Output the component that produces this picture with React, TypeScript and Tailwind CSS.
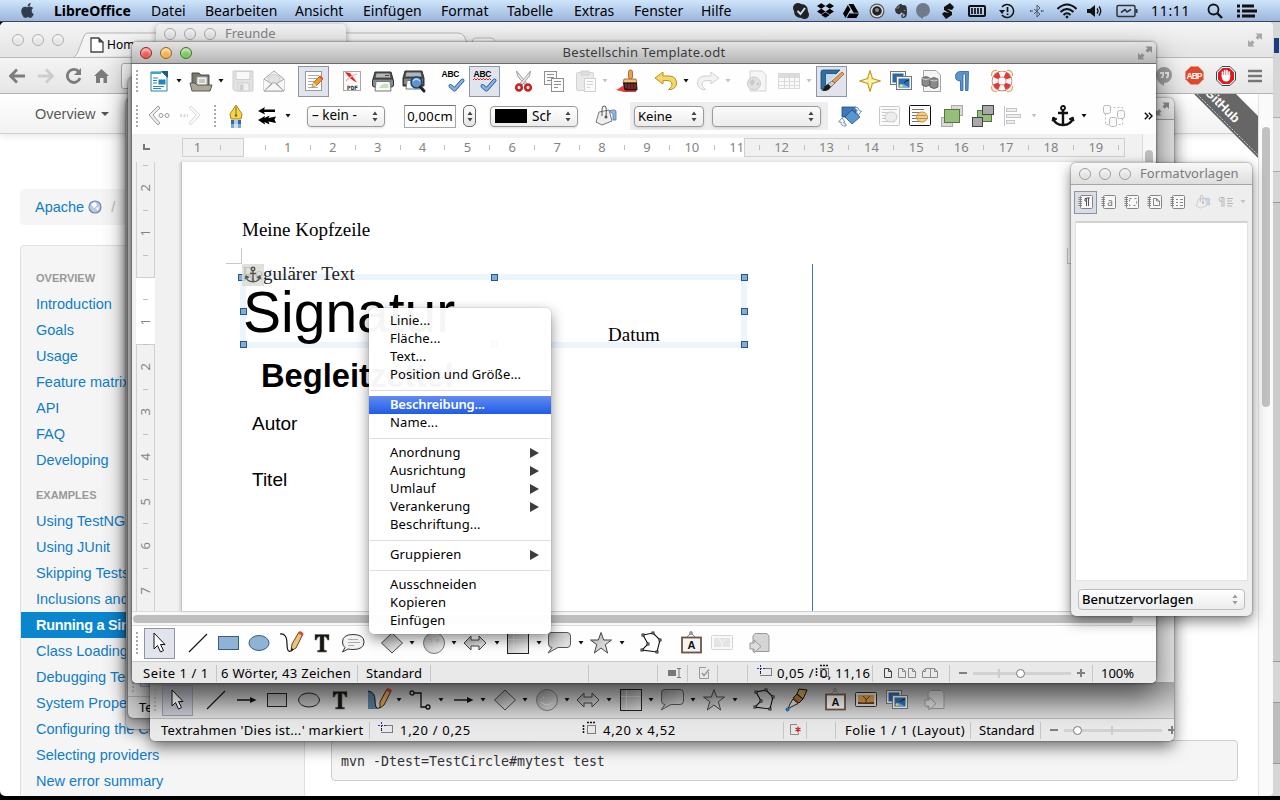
import React from "react";
import { FaApple, FaDropbox, FaGoogleDrive, FaEvernote } from "react-icons/fa";

const fullscreen = (
  <svg className="h-4 w-4 shrink-0" viewBox="0 0 16 16" fill="#8a8a8a">
    <path d="M8.500 1.500H15V8L12.800 5.800L10.800 7.800L8.500 5.500L10.500 3.500Z" />
    <path d="M7.500 14.500H1V8L3.200 10.200L5.200 8.200L7.500 10.500L5.500 12.500Z" />
  </svg>
);

const icons: Record<string, React.ReactNode> = {
  new: (
    <>
      <path d="M4 3H15L20 8V22H4Z" fill="#fff" stroke="#2a7ea8" />
      <path d="M14 2H21V9Z" fill="#16608a" />
      <rect x="4" y="3" width="10" height="2" fill="#3aa5cf" />
      <path d="M6 9H11M6 11.500H10M6 14H10M6 17.500H17M6 19.500H14" stroke="#2b87b5" strokeWidth="1.200" />
      <rect x="11.500" y="10.500" width="7" height="5" fill="#1c86c0" />
    </>
  ),
  open: (
    <>
      <path d="M3 4H10L12 6H20V17H3Z" fill="#77776a" stroke="#4d4d45" />
      <path d="M8 8H18V17H8Z" fill="#f4f4f0" stroke="#aaa" />
      <path d="M10 11H16M10 13H16" stroke="#999" />
      <path d="M1 14H6L8 16H23L21 22H3Z" fill="#a9a897" stroke="#5a5a50" />
    </>
  ),
  save: (
    <g stroke="#cfcfcf">
      <path d="M2 2H22V22H4L2 20Z" fill="#e2e2e2" />
      <rect x="5" y="2.500" width="14" height="8" fill="#f8f8f8" />
      <rect x="7" y="14" width="11" height="8" fill="#f0f0f0" />
      <rect x="9" y="16" width="3" height="5" fill="#cecece" />
    </g>
  ),
  mail: (
    <g fill="#f6f6f6" stroke="#a8a8a8">
      <path d="M2 10L12 2L22 10V22H2Z" />
      <path d="M6 8L12 5L18 8V15H6Z" fill="#e2e2e2" stroke="#ccc" />
      <path d="M2 10L10 15L2 22M22 10L14 15L22 22M2 22L10 14H14L22 22Z" />
    </g>
  ),
  edit: (
    <>
      <rect x="3.500" y="2.500" width="16" height="19" fill="#fff" stroke="#999" />
      <path d="M6 6.500H17M6 9.500H16M6 12.500H13M6 15.500H11M6 18.500H16" stroke="#aaa" />
      <path d="M10 18L11.500 13.500L18 7L21 10L14.500 16.500Z" fill="#f59a1b" stroke="#9c5b08" strokeWidth=".8" />
      <path d="M10 18L11.500 13.500L14.500 16.500Z" fill="#edd3a4" />
      <path d="M17 8L20 11L21.500 9.500L18.500 6.500Z" fill="#d9534f" />
    </>
  ),
  pdf: (
    <>
      <rect x="3.500" y="2.500" width="17" height="19" fill="#fafafa" stroke="#a9a9a9" />
      <path d="M5 3L10 4L17 13.500Q9 10 5 3Z" fill="#e0282c" />
      <path d="M6 12Q10 7 17 5" fill="none" stroke="#f3b0b0" strokeWidth="1.300" />
      <text x="12.500" y="20.500" textAnchor="middle" fontFamily="DejaVu Sans Mono" fontSize="6" fontWeight="bold" fill="#222">PDF</text>
    </>
  ),
  print: (
    <>
      <path d="M4 3H20L22 10V17H2V10Z" fill="#4a4e50" stroke="#333" />
      <path d="M5.500 4.500H18.500L19.500 8.500H4.500Z" fill="#b3b7b9" />
      <path d="M14 6.500H18" stroke="#444" />
      <rect x="1.500" y="10" width="21" height="8" rx="2" fill="#85898b" stroke="#333" />
      <path d="M5 12.500H19L20 22H4Z" fill="#f8faf7" stroke="#777" />
      <path d="M8 19Q11 14 17 15L17.500 19Z" fill="#c3e3b4" />
    </>
  ),
  preview: (
    <>
      <path d="M3 2H20L22 9V17H1V9Z" fill="#4a4e50" stroke="#333" />
      <path d="M4.500 3.500H18.500L19.500 7.500H3.500Z" fill="#b3b7b9" />
      <rect x="1.500" y="9" width="20" height="7" rx="1.500" fill="#85898b" stroke="#333" />
      <path d="M5 11.500H17L18 20H4Z" fill="#f8faf7" stroke="#777" />
      <circle cx="14.500" cy="13.500" r="5.500" fill="#5c93d2" stroke="#20456f" strokeWidth="1.500" />
      <path d="M11 12Q14 8 18 12" stroke="#bcd6f2" strokeWidth="1.500" fill="none" />
      <path d="M18.500 18L22 22" stroke="#222" strokeWidth="3" strokeLinecap="round" />
    </>
  ),
  abc: (
    <>
      <text x="9.500" y="7.500" textAnchor="middle" fontFamily="Liberation Sans" fontSize="8.500" fontWeight="bold" textLength="18" fill="#000">ABC</text>
      <path d="M9.500 17L13.500 20.500L21.500 11.500" fill="none" stroke="#285a94" strokeWidth="4" strokeLinecap="round" strokeLinejoin="round" />
      <path d="M9.500 17L13.500 20.500L21.500 11.500" fill="none" stroke="#85b4e6" strokeWidth="2.400" strokeLinecap="round" strokeLinejoin="round" />
    </>
  ),
  abcAuto: (
    <>
      <text x="9.500" y="7.500" textAnchor="middle" fontFamily="Liberation Sans" fontSize="8.500" fontWeight="bold" textLength="18" fill="#000">ABC</text>
      <path d="M0 11L1.500 9.500L3 11L4.500 9.500L6 11L7.500 9.500L9 11L10.500 9.500L12 11L13.500 9.500L15 11L16.500 9.500L18 11" fill="none" stroke="#e02020" />
      <path d="M9.500 17L13.500 20.500L21.500 11.500" fill="none" stroke="#285a94" strokeWidth="4" strokeLinecap="round" strokeLinejoin="round" />
      <path d="M9.500 17L13.500 20.500L21.500 11.500" fill="none" stroke="#85b4e6" strokeWidth="2.400" strokeLinecap="round" strokeLinejoin="round" />
    </>
  ),
  cut: (
    <>
      <path d="M4.500 2L5.500 7L13 16L14.500 14Z" fill="#e8e8e8" stroke="#8a8a8a" strokeWidth=".8" />
      <path d="M18.500 2L17.500 7L10 16L8.500 14Z" fill="#e8e8e8" stroke="#8a8a8a" strokeWidth=".8" />
      <g fill="none" stroke="#cc1f22" strokeWidth="2.600">
        <ellipse cx="7" cy="18.500" rx="2.800" ry="3" />
        <ellipse cx="16" cy="18.500" rx="2.800" ry="3" />
      </g>
    </>
  ),
  copy: (
    <g fill="#fafafa" stroke="#8f8f8f">
      <rect x="2.500" y="2.500" width="12" height="13" />
      <path d="M5 5.500H12M5 8.500H12M5 11.500H9" />
      <rect x="9.500" y="9.500" width="12" height="13" />
      <path d="M12 12.500H19M12 15.500H19M12 18.500H16" />
    </g>
  ),
  paste: (
    <g stroke="#d2d2d2">
      <rect x="2.500" y="3.500" width="17" height="18" rx="1" fill="#e9e9e9" />
      <rect x="7" y="2" width="8" height="4" fill="#ddd" />
      <rect x="10.500" y="9.500" width="11" height="13" fill="#fafafa" />
      <path d="M13 12.500H19M13 15.500H19M13 18.500H16" />
    </g>
  ),
  brush: (
    <>
      <path d="M0 21Q7 17 9 15L20 20L20 23H8Z" fill="#e94044" />
      <rect x="12.500" y="1" width="4" height="9" rx="1.800" fill="#e8a14e" stroke="#9a5b1c" strokeWidth=".8" />
      <path d="M8 10H20L21 14H7Z" fill="#efc07f" stroke="#9a5b1c" strokeWidth=".8" />
      <path d="M7.500 14H20.500L21 21H9Z" fill="#3a2020" stroke="#1b1111" />
      <path d="M10 19V15M13 20V15M16 20V15M19 20V15" stroke="#b33" />
    </>
  ),
  undo: (
    <path d="M1 9L9 3V7H16Q22.500 8 22.500 14Q22.500 19 17 20.500H14.500Q19 18 18 14Q17 11.500 13 11.500H9V15Z" fill="#f5d967" stroke="#b8901a" strokeLinejoin="round" />
  ),
  redo: (
    <path d="M23 9L15 3V7H8Q1.500 8 1.500 14Q1.500 19 7 20.500H9.500Q5 18 6 14Q7 11.500 11 11.500H15V15Z" fill="#f3f3f3" stroke="#d0d0d0" strokeLinejoin="round" />
  ),
  web: (
    <g stroke="#d4d4d4">
      <path d="M5 2H17L21 6V22H5Z" fill="#f6f6f6" />
      <circle cx="9" cy="14.500" r="6.500" fill="#e2e2e2" stroke="#cacaca" />
      <path d="M4 13L8 10L10 13L7 17ZM11 15L14 13L14 17Z" fill="#cacaca" stroke="none" />
    </g>
  ),
  table: (
    <g stroke="#dadada" fill="#fafafa">
      <rect x="1.500" y="4.500" width="21" height="15" />
      <rect x="2" y="5" width="20" height="3" fill="#ddd" stroke="none" />
      <path d="M2 8.500H22M2 12.500H22M2 16.500H22M7.500 5V20M12.500 5V20M17.500 5V20" />
    </g>
  ),
  draw: (
    <>
      <path d="M1 3Q1 1 3 1H20L16 5H6V15L3 20H1Z" fill="#2f6ea3" stroke="#1a476f" strokeWidth=".8" />
      <path d="M6 5H16L6 16Z" fill="#c4d8ea" />
      <path d="M22 3L24 5L15 14L12 12Z" fill="#e3a262" stroke="#94602c" strokeWidth=".8" />
      <path d="M15 14L12 12L8 15L11 18Z" fill="#ccc" stroke="#666" strokeWidth=".8" />
      <path d="M11 18L8 15Q4 17 4 19Q3 21 1 21Q7 24 11 18Z" fill="#1b1b1b" />
    </>
  ),
  navigator: (
    <>
      <path d="M12 1.500L14.500 9.500L22.500 12L14.500 14.500L12 22.500L9.500 14.500L1.500 12L9.500 9.500Z" fill="#f7e27a" stroke="#b8941c" strokeLinejoin="round" />
      <path d="M12 6V18M6 12H18" stroke="#fdf6c6" strokeWidth="1.500" />
    </>
  ),
  gallery: (
    <>
      <rect x="1.500" y="2.500" width="15" height="13" fill="#f6f6f6" stroke="#777" />
      <rect x="3.500" y="4.500" width="11" height="9" fill="#2767a5" />
      <rect x="7.500" y="7.500" width="15" height="13" fill="#f6f6f6" stroke="#777" />
      <rect x="9.500" y="9.500" width="11" height="9" fill="#2b6fb4" />
      <path d="M9.500 18.500L14 15L20.500 18.500Z" fill="#7db3de" />
      <circle cx="12" cy="16.500" r="1.500" fill="#f3e36b" />
      <path d="M15 14L17 12L20 11" stroke="#123" fill="none" />
    </>
  ),
  datasource: (
    <>
      <path d="M4.500 1.500H17L21.500 6V22.500H4.500Z" fill="#f4f4f4" stroke="#a5a5a5" />
      <g fill="#8a8a8a" stroke="#555" strokeWidth=".8">
        <path d="M3 9Q7 6 11 9V16Q7 19 3 16Z" />
        <path d="M11 10Q15 7 19 10V18Q15 21 11 18Z" />
      </g>
      <path d="M3 9.500Q7 12 11 9.500M11 11Q15 13 19 11" stroke="#ccc" fill="none" />
    </>
  ),
  para: (
    <path d="M18.500 2.500H10Q5.500 3 5.500 7.500Q5.500 12 10.500 12V21.500H13V5H15.500V21.500H18Z" fill="#5b95cf" stroke="#2c609a" strokeWidth=".8" />
  ),
  help: (
    <>
      <g fill="none" stroke="#e6a55c" strokeWidth="1.200">
        <path d="M1.500 7Q1 1 7 1.500M17 1.500Q23 1 22.500 7M22.500 17Q23 23 17 22.500M7 22.500Q1 23 1.500 17" />
      </g>
      <circle cx="12" cy="12" r="7" fill="none" stroke="#b43a2e" strokeWidth="6.500" />
      <circle cx="12" cy="12" r="7" fill="none" stroke="#fafafa" strokeWidth="5.500" />
      <circle cx="12" cy="12" r="7" fill="none" stroke="#e23b35" strokeWidth="5.500" strokeDasharray="5.500 5.500" strokeDashoffset="-2.750" />
    </>
  ),
  prevPoint: (
    <>
      <path d="M11 2L2 11L11 21L13 19L6 11L13 4Z" fill="#eee" stroke="#9b9b9b" />
      <circle cx="14" cy="11.500" r="2" fill="none" stroke="#999" />
      <circle cx="20" cy="11.500" r="2" fill="none" stroke="#999" />
    </>
  ),
  nextPoint: (
    <g opacity=".35">
      <path d="M13 2L22 11L13 21L11 19L18 11L11 4Z" fill="#eee" stroke="#9b9b9b" />
      <path d="M2 11.500H10" stroke="#999" strokeWidth="3" strokeDasharray="2 1.500" />
    </g>
  ),
  pen: (
    <>
      <path d="M12 1L18 10L17 15H7L6 10Z" fill="#f6d54d" stroke="#a98312" />
      <path d="M12 3V11" stroke="#8a6a10" />
      <circle cx="12" cy="11.500" r="1.300" fill="#8a6a10" />
      <path d="M7 16H17V24H7Z" fill="#2f6ca5" />
      <path d="M10 16H14V24H10Z" fill="#a9cdee" />
      <path d="M6 20H18V24H6Z" fill="#fff" fillOpacity=".4" />
    </>
  ),
  arrowStyle: (
    <g fill="#000">
      <path d="M3 7L10 3L9 5.500H20V8H9L10 10.500Z" />
      <path d="M3 16L10 12L9.500 14L14.500 11.500L13.500 14L21 12.500L19.500 15.500L21 19L13.500 17.500L14.500 20.500L9.500 18L10 20.500Z" />
    </g>
  ),
  bucket: (
    <>
      <path d="M15 7Q23 4 22 9V16H19V10Z" fill="#8fb4dd" stroke="#4e77a8" strokeWidth=".8" />
      <path d="M5 8L15 6L18 17L8 21L2 18Z" fill="#efefef" stroke="#777" />
      <path d="M8 12V5Q8 1.500 11 2Q13 3 12 13" fill="none" stroke="#555" />
      <circle cx="12" cy="13" r="1.500" fill="#555" />
    </>
  ),
  rotate: (
    <>
      <path d="M4 3H18V13H4Z" fill="#3f78b5" stroke="#1e4d80" strokeWidth=".8" />
      <path d="M14 6L22 13L14 20L7 13Z" fill="#5a95cf" stroke="#1e4d80" strokeWidth=".8" />
      <path d="M.500 18L4 14L7 18H5.500Q5.500 20 8 20V22Q3 22.500 3 18ZM17 3Q21 3 21.500 7L23.500 7L20.500 11L18 7H19.500Q19 5 17 5Z" fill="#fff" stroke="#4d7eb1" strokeWidth=".8" />
    </>
  ),
  wrapOff: (
    <>
      <rect x="2.500" y="2.500" width="20" height="19" rx="1" fill="#fafafa" stroke="#c8c8c8" />
      <path d="M5 5.500H20M5 8.500H16M5 11.500H12M5 14.500H10M5 17.500H18" stroke="#c8c8c8" />
      <ellipse cx="14" cy="13" rx="6" ry="5" fill="#ececec" stroke="#cacaca" />
    </>
  ),
  wrapOn: (
    <>
      <rect x="1.500" y="1.500" width="21" height="20" rx="1" fill="#fafafa" stroke="#111" />
      <path d="M4 5.500H16M4 8.500H14M4 11.500H18M4 14.500H20M4 17.500H16" stroke="#777" />
      <ellipse cx="14" cy="13" rx="5.500" ry="5" fill="#f3cf83" stroke="#c79a3e" />
      <path d="M9 11.500H18M9 14.500H19" stroke="#b89050" />
    </>
  ),
  front: (
    <>
      <rect x="11.500" y="1.500" width="11" height="10" fill="#d9d9d9" stroke="#aaa" />
      <rect x="1.500" y="13.500" width="11" height="9" fill="#d9d9d9" stroke="#aaa" />
      <rect x="4.500" y="5.500" width="15" height="13" fill="#97bd7b" stroke="#54783b" />
    </>
  ),
  back: (
    <>
      <rect x="6.500" y="6.500" width="14" height="11" fill="#97bd7b" stroke="#54783b" />
      <rect x="11.500" y="1.500" width="11" height="9" fill="#a9a9a9" stroke="#444" />
      <rect x="1.500" y="13.500" width="10" height="9" fill="#a9a9a9" stroke="#444" />
    </>
  ),
  align: (
    <g stroke="#c4c4c4" fill="#eee">
      <path d="M3.500 2V22" />
      <rect x="5.500" y="4.500" width="10" height="3" />
      <rect x="5.500" y="10.500" width="14" height="3" />
      <rect x="5.500" y="16.500" width="8" height="3" />
    </g>
  ),
  anchor: (
    <g fill="none" stroke="#111" strokeWidth="2.400">
      <circle cx="12" cy="4" r="2" strokeWidth="1.800" />
      <path d="M12 6V21M7 9H17" />
      <path d="M2 14Q4 21 12 21Q20 21 22 14" />
      <path d="M1 17L2 13L6 15ZM23 17L22 13L18 15Z" fill="#111" strokeWidth="1" />
    </g>
  ),
  group: (
    <g fill="none" stroke="#b8b8b8">
      <rect x="3.500" y="3.500" width="17" height="17" strokeDasharray="2 2" />
      <g fill="#fafafa">
        <rect x="1.500" y="1.500" width="7" height="8" rx="2" />
        <rect x="15.500" y="6.500" width="7" height="8" rx="2" />
        <rect x="7.500" y="13.500" width="7" height="9" rx="2" />
      </g>
    </g>
  ),
  cursor: <path d="M6 2V18L9.500 14.500L12.500 21L15.500 19.500L12.500 13.500H17Z" fill="#fff" stroke="#111" />,
  line: <path d="M3 21L21 3" stroke="#111" strokeWidth="1.100" />,
  arrow: (
    <>
      <path d="M3 12H17" stroke="#111" strokeWidth="1.400" />
      <path d="M16 9L22.500 12L16 15Z" fill="#111" />
    </>
  ),
  rect: <rect x="2.500" y="5.500" width="20" height="13" fill="#8fb3d4" stroke="#315f87" />,
  rectGray: <rect x="2.500" y="5.500" width="19" height="13" fill="#000" fillOpacity=".08" stroke="#222" />,
  ellipse: <ellipse cx="12" cy="12" rx="10" ry="7.500" fill="#8fb3d4" stroke="#315f87" />,
  ellipseGray: <ellipse cx="12" cy="12" rx="10.500" ry="7" fill="#000" fillOpacity=".08" stroke="#222" />,
  pencil: (
    <>
      <path d="M1 3Q8 2 8 13Q8 22 12 20Q14 19 15 13" fill="none" stroke="#111" strokeWidth="1.200" />
      <path d="M20 1L24 3L17 17L12 20L13 13Z" fill="#efc179" stroke="#4e3417" strokeWidth=".9" />
      <path d="M19 2L23 5L24.500 2L21 0Z" fill="#d94b3d" />
      <path d="M12 20L12.500 17L15 18.500Z" fill="#111" />
    </>
  ),
  curve: (
    <>
      <path d="M0 3Q7 4 7 12Q7 20 10 21H0Z" fill="#567a97" />
      <path d="M0 3Q7 4 7 12Q7 22 11 20Q14 19 14 13" fill="none" stroke="#111" />
      <path d="M19 1L23 3L16 17L12 20L12 14Z" fill="#d9a35a" stroke="#3a2710" />
      <path d="M18 2L22 5L24 2L20 0Z" fill="#c2402f" />
    </>
  ),
  text: (
    <path d="M5 3.500H19V9H17.500Q17 5.500 14 5.500V18.500Q14 19.500 16.500 19.500V21H7.500V19.500Q10 19.500 10 18.500V5.500Q7 5.500 6.500 9H5Z" fill="#151515" stroke="#6d6550" strokeWidth=".6" />
  ),
  speech: (
    <>
      <path d="M12 3.500Q23 3.500 23 11Q23 18.500 12 18.500Q9 18.500 7 18L1.500 21L4 16.500Q1.500 15 1.500 11Q1.500 3.500 12 3.500Z" fill="#f2f2f2" stroke="#333" />
      <path d="M7 8.500H17M7 11.500H19M7 14.500H13" stroke="#aaa" />
    </>
  ),
  diamond: <path d="M12 2L22.500 12L12 22L1.500 12Z" fill="url(#shade)" stroke="#444" />,
  smiley: (
    <>
      <circle cx="12" cy="12" r="10.500" fill="url(#shade)" stroke="#777" />
      <circle cx="8.500" cy="9.500" r="1.200" fill="#d8d8d8" stroke="#888" strokeWidth=".5" />
      <circle cx="15.500" cy="9.500" r="1.200" fill="#d8d8d8" stroke="#888" strokeWidth=".5" />
      <path d="M6 14Q12 20 18 14" fill="none" stroke="#ddd" />
    </>
  ),
  dblarrow: <path d="M1 12L8 5V9H16V5L23 12L16 19V15H8V19Z" fill="url(#shade)" stroke="#444" />,
  square: (
    <>
      <rect x="1.500" y="1.500" width="21" height="21" fill="url(#shade)" stroke="#222" />
      <path d="M7.500 2V22M2 8.500H22" stroke="#d8d8d8" strokeOpacity=".6" />
    </>
  ),
  callout: (
    <path d="M4 1.500H20Q23.500 1.500 23.500 5V13Q23.500 16.500 20 16.500H11L1 22L5 16.500Q1.500 16.500 1.500 13V5Q1.500 1.500 4 1.500Z" fill="url(#shade)" stroke="#555" />
  ),
  star: (
    <path d="M12 1.500L14.700 9H22.500L16.300 13.700L18.600 22L12 17L5.400 22L7.700 13.700L1.500 9H9.300Z" fill="url(#shade)" stroke="#444" />
  ),
  polygon: (
    <>
      <path d="M4 4L14 2L21 9L18 21L3 19L9 13Z" fill="none" stroke="#111" strokeWidth="1.100" />
      <g fill="#fff" stroke="#111" strokeWidth=".9">
        <rect x="3" y="3" width="2" height="2" />
        <rect x="13" y="1" width="2" height="2" />
        <rect x="20" y="8" width="2" height="2" />
        <rect x="17" y="20" width="2" height="2" />
        <rect x="2" y="18" width="2" height="2" />
        <rect x="8" y="12" width="2" height="2" />
      </g>
    </>
  ),
  connector: (
    <g fill="none" stroke="#111" strokeWidth="1.300">
      <path d="M6 5H13V19H18" />
      <circle cx="4" cy="5" r="2" />
      <circle cx="20" cy="19" r="2" />
    </g>
  ),
  dropper: (
    <>
      <path d="M15 1L23 2L19 11L13 6Z" fill="#c79a5a" stroke="#111" />
      <path d="M13 6L19 11L15 15L9 10Z" fill="#a9743a" stroke="#111" />
      <path d="M9 10L15 15L12.500 16.500L8 12.500Z" fill="#c2402f" />
      <path d="M9 11L14 15.500L7 19L4 21L6 16Z" fill="#d5d5d5" stroke="#222" />
      <circle cx="3.500" cy="21.500" r="2" fill="#2a78b5" />
    </>
  ),
  fontwork: (
    <>
      <path d="M8 6L12 2L16 6" fill="none" stroke="#888" />
      <circle cx="12" cy="2" r="1.500" fill="#aaa" stroke="#666" strokeWidth=".6" />
      <rect x="3" y="6.500" width="19" height="15" fill="#f4f4f4" stroke="#6d5442" strokeWidth="1.800" />
      <text x="12.500" y="18" textAnchor="middle" fontFamily="Liberation Sans" fontWeight="bold" fontSize="11" fill="#111">A</text>
    </>
  ),
  imageOff: (
    <g opacity=".6">
      <rect x="1.500" y="4.500" width="21" height="14" rx="1" fill="#f6f6f6" stroke="#bbb" />
      <rect x="4" y="7" width="16" height="9" fill="#d4d4d4" />
      <path d="M12 16V12L9 8M12 12L16 8" stroke="#f4f4f4" fill="none" />
    </g>
  ),
  image: (
    <>
      <rect x="1.500" y="4.500" width="21" height="14" rx="1" fill="#d9d9d9" stroke="#333" />
      <rect x="4" y="7" width="16" height="9" fill="#d99a45" />
      <path d="M4 14L9 14.500L20 14V16H4Z" fill="#5b3c1c" />
      <path d="M12 15V11L9 8M12 12L16 8" stroke="#5b3c1c" />
    </>
  ),
  exportIcon: (
    <>
      <path d="M7 2.500H19L21 5V20.500H5V5Z" fill="#d5d5d5" stroke="#999" />
      <path d="M2 12H6V9L13 15.500L6 22V18H2Z" fill="#ddd" stroke="#999" />
    </>
  ),
};

function I({ n, c = "" }: { n: string; c?: string }) {
  return (
    <svg viewBox="0 0 24 24" fill="none" className={`h-6 w-6 shrink-0 overflow-visible ${c}`}>
      {icons[n]}
    </svg>
  );
}

function Caret({ c = "", off = false }: { c?: string; off?: boolean }) {
  return (
    <svg viewBox="0 0 6 4" className={`h-1 w-1.5 shrink-0 ${c}`}>
      <path d="M.500 0H5.500L3 3.500Z" fill={off ? "#c4c4c4" : "#111"} />
    </svg>
  );
}

const Grip = ({ c = "" }: { c?: string }) => (
  <span className={`h-[22px] w-0 shrink-0 border-l-2 border-dotted border-[#a9a9a9] ${c}`} />
);

function Pressed({ n, c = "" }: { n: string; c?: string }) {
  return (
    <span className={`flex h-[31px] w-[31px] shrink-0 items-center justify-center border border-[#9095a5] bg-[#8a98b8]/25 ${c}`}>
      <I n={n} />
    </span>
  );
}

function Steps({ faint = false }: { faint?: boolean }) {
  return (
    <svg viewBox="0 0 6 11" className="h-[11px] w-1.5 shrink-0" fill={faint ? "#999" : "#444"}>
      <path d="M.500 4L3 .500L5.500 4ZM.500 7L3 10.500L5.500 7Z" />
    </svg>
  );
}

const Sep = ({ c = "" }: { c?: string }) => <span className={`h-[17px] w-px shrink-0 bg-[#c6c6c6] ${c}`} />;

const Orb = ({ c }: { c: string }) => <span className={`h-3 w-3 shrink-0 rounded-full border shadow-[inset_0_3px_3px_rgba(255,255,255,0.6)] ${c}`} />;

function Ruler() {
  const nums = ["", ...Array.from({ length: 19 }, (_, i) => String(i + 1))];
  return (
    <div className="ml-[28px] grid h-[19px] w-[943px] shrink-0 overflow-hidden">
      <div className="flex [grid-area:1/1]">
        <span className="w-[62px] border border-[#cfcfcf] bg-[#f1f1f1]" />
        <span className="w-[500px] bg-white" />
        <span className="w-[381px] border border-[#cfcfcf] bg-[#f1f1f1]" />
      </div>
      <div className="flex items-center text-[13px] text-[#848484] [grid-area:1/1]">
        <span className="flex w-[39px] shrink-0 items-center">
          <span className="flex-1 pr-[7px] text-center">1</span>
          <span className="h-[5px] w-px bg-[#c0c0c0]" />
        </span>
        {nums.map((n, i) => (
          <span key={i} className="flex w-[44.900px] shrink-0 items-center">
            <span className="flex-1 text-center">{n}</span>
            <span className="h-[5px] w-px bg-[#c0c0c0]" />
          </span>
        ))}
      </div>
    </div>
  );
}

function VRuler() {
  const nums = ["2", "1", "", "1", "2", "3", "4", "5", "6", "7"];
  return (
    <div className="grid h-[449px] w-[19px] shrink-0 overflow-hidden">
      <div className="flex flex-col [grid-area:1/1]">
        <span className="h-[116px] shrink-0 border border-t-0 border-[#cfcfcf]" />
        <span className="h-[66px] shrink-0 bg-white" />
        <span className="h-[280px] shrink-0 border border-[#cfcfcf]" />
      </div>
      <div className="flex flex-col items-center text-[13px] text-[#848484] [grid-area:1/1]">
        <span className="mt-[3px] h-px w-[5px] shrink-0 bg-[#c0c0c0]" />
        {nums.map((n, i) => (
          <span key={i} className="flex h-[44.800px] shrink-0 flex-col items-center">
            <span className="flex flex-1 -rotate-90 items-center">{n}</span>
            <span className="h-px w-[5px] bg-[#c0c0c0]" />
          </span>
        ))}
      </div>
    </div>
  );
}

const Handle = ({ c }: { c: string }) => <span className={`absolute h-[7px] w-[7px] border border-[#20588f] bg-[#83abd3] ${c}`} />;

function Canvas() {
  return (
    <div className="relative ml-[26px] h-[449px] flex-1 overflow-hidden border-l border-[#c4c4c4] bg-white text-black shadow-[-1px_0_3px_rgba(0,0,0,0.150)]">
      <span className="absolute left-[60px] top-[58px] whitespace-nowrap font-['Liberation_Serif',serif] text-[19px] leading-[20px]">Meine Kopfzeile</span>
      <span className="absolute left-[44px] top-[86px] h-[16px] w-[16px] border-b border-r border-[#c8c8c8]" />
      <span className="absolute left-[885px] top-[86px] h-[16px] w-[16px] border-b border-l border-[#c8c8c8]" />
      <span className="absolute left-[58px] top-[112px] h-[74px] w-[507px] border-[6px] border-[#edf5fc]" />
      <span className="absolute left-[60px] top-[102px] whitespace-nowrap font-['Liberation_Serif',serif] text-[19px] leading-[20px] text-[#222]">Regulärer Text</span>
      <span className="absolute left-[61px] top-[118px] whitespace-nowrap font-['Liberation_Sans',sans-serif] text-[57px] leading-[64px]">Signatur</span>
      <span className="absolute left-[79px] top-[195px] whitespace-nowrap font-['Liberation_Sans',sans-serif] text-[32.700px] font-bold leading-[38px]">Begleitzettel</span>
      <span className="absolute left-[70px] top-[252px] whitespace-nowrap font-['Liberation_Sans',sans-serif] text-[19px] leading-[20px]">Autor</span>
      <span className="absolute left-[70px] top-[308px] whitespace-nowrap font-['Liberation_Sans',sans-serif] text-[19px] leading-[20px]">Titel</span>
      <span className="absolute left-[426px] top-[163px] whitespace-nowrap font-['Liberation_Serif',serif] text-[19px] leading-[20px]">Datum</span>
      <span className="absolute left-[630px] top-[102px] h-[347px] w-px bg-[#3878ac]" />
      <Handle c="left-[56px] top-[112px]" />
      <span className="absolute left-[60px] top-[102px] flex h-[22px] w-[22px] items-center justify-center bg-[#d9ddd6]/85">
        <svg viewBox="0 0 24 24" fill="none" stroke="#555" className="h-[18px] w-[18px]">
          <circle cx="12" cy="4" r="2.300" strokeWidth="2" />
          <path d="M12 6V21M8 10H16M3 14Q4 21 12 21Q20 21 21 14M1.500 17L3 13.500L6.500 15.500M22.500 17L21 13.500L17.500 15.500" strokeWidth="2" />
        </svg>
      </span>
      <Handle c="left-[309px] top-[112px]" />
      <Handle c="left-[559px] top-[112px]" />
      <Handle c="left-[58px] top-[146px]" />
      <Handle c="left-[559px] top-[146px]" />
      <Handle c="left-[58px] top-[179px]" />
      <Handle c="left-[309px] top-[179px]" />
      <Handle c="left-[559px] top-[179px]" />
    </div>
  );
}

function PosIcon() {
  return (
    <svg viewBox="0 0 16 12" className="h-3 w-4 shrink-0" fill="none">
      <path d="M3.500 0V8M0 3.500H8" stroke="#2430b8" strokeDasharray="2 1" />
      <path d="M3.500 10.500H14.500V3.500H8" stroke="#111" strokeDasharray="1 1" />
      <path d="M3.500 4V10" stroke="#111" strokeDasharray="1 1" />
    </svg>
  );
}

function SizeIcon({ c = "" }: { c?: string }) {
  return (
    <svg viewBox="0 0 16 14" className={`h-3.5 w-4 shrink-0 ${c}`} fill="none" stroke="#111">
      <rect x="5.500" y="4.500" width="8" height="8" strokeDasharray="1 1" />
      <path d="M1.500 4V12M5 1.500H14" strokeDasharray="2 1" strokeWidth="1.500" />
    </svg>
  );
}

function MainWindow() {
  return (
    <section className="absolute left-[132px] top-[42px] flex h-[641px] w-[1024px] flex-col overflow-hidden rounded-[5px] bg-[#fefefe]">
      <header className="flex h-[22px] shrink-0 items-center border-b border-[#6c6c6c] bg-linear-to-b from-[#e3e3e3] to-[#b5b5b5] pl-2">
        <Orb c="border-[#8f2a26] bg-[#ec5b54]" />
        <Orb c="ml-2 border-[#97651c] bg-[#f4b04c]" />
        <Orb c="ml-2 border-[#3d7429] bg-[#7fc462]" />
        <span className="flex-1 pr-[41px] text-center text-[13px] tracking-[0.250px] text-[#3c3c3c]">Bestellschin Template.odt</span>
        <span className="mr-[3px] flex">{fullscreen}</span>
      </header>
      <div className="flex h-[34px] shrink-0 items-center">
        <Grip c="ml-1" />
        <I n="new" c="ml-[9px]" />
        <Caret c="ml-[5px]" />
        <I n="open" c="ml-[7px]" />
        <Caret c="ml-[5px]" />
        <I n="save" c="ml-[7px]" />
        <I n="mail" c="ml-[7px]" />
        <Pressed n="edit" c="ml-[12px]" />
        <I n="pdf" c="ml-[11px]" />
        <I n="print" c="ml-[7px]" />
        <I n="preview" c="ml-[7px]" />
        <I n="abc" c="ml-[15px]" />
        <Pressed n="abcAuto" c="ml-1" />
        <I n="cut" c="ml-[12px]" />
        <I n="copy" c="ml-[6px]" />
        <I n="paste" c="ml-2" />
        <Caret c="ml-1" off />
        <I n="brush" c="ml-2" />
        <I n="undo" c="ml-[14px]" />
        <Caret c="ml-[5px]" />
        <I n="redo" c="ml-[7px]" />
        <Caret c="ml-[5px]" off />
        <I n="web" c="ml-[14px]" />
        <I n="table" c="ml-2" />
        <Caret c="ml-[5px]" off />
        <Pressed n="draw" c="ml-1" />
        <I n="navigator" c="ml-[11px]" />
        <I n="gallery" c="ml-[7px]" />
        <I n="datasource" c="ml-[6px]" />
        <I n="para" c="ml-[7px]" />
        <I n="help" c="ml-4" />
      </div>
      <div className="flex h-[36px] shrink-0 items-center text-[13.500px] text-black">
        <Grip c="ml-1" />
        <I n="prevPoint" c="ml-[9px]" />
        <I n="nextPoint" c="ml-[7px]" />
        <Grip c="ml-[12px]" />
        <I n="pen" c="ml-2" />
        <I n="arrowStyle" c="ml-[7px]" />
        <Caret c="ml-[6px]" />
        <span className="ml-4 flex h-[21px] w-[78px] shrink-0 items-center justify-between rounded-[4px] border border-[#9a9a9a] bg-linear-to-b from-white to-[#ececec] pl-1 pr-1.5 shadow-sm">
          – kein - <Steps />
        </span>
        <span className="ml-[19px] flex h-[23px] w-[52px] shrink-0 items-center justify-center border border-[#a8a8a8] border-t-[#777] bg-white text-[13px] tracking-[0.250px]">0,00cm</span>
        <span className="ml-[7px] flex h-[22px] w-[13px] shrink-0 items-center justify-center rounded-[5px] border border-[#666] bg-linear-to-b from-white to-[#e4e4e4]">
          <Steps />
        </span>
        <span className="ml-[14px] flex h-[21px] w-[88px] shrink-0 items-center rounded-[4px] border border-[#9a9a9a] bg-linear-to-b from-white to-[#ececec] pl-1 pr-1.5 shadow-sm">
          <span className="h-[14px] w-[32px] bg-black" />
          <span className="ml-[5px] w-[19px] overflow-hidden whitespace-nowrap leading-[19px]">Sch</span>
          <span className="ml-auto flex"><Steps /></span>
        </span>
        <I n="bucket" c="ml-4" />
        <span className="ml-[12px] flex h-[28px] w-[198px] shrink-0 items-center gap-2 bg-[#eeeeee] pl-1">
          <span className="flex h-[21px] w-[70px] items-center justify-between rounded-[4px] border border-[#9a9a9a] bg-linear-to-b from-white to-[#ececec] pl-[3px] pr-1.5 text-[13px] shadow-sm">
            Keine <Steps />
          </span>
          <span className="flex h-[21px] w-[109px] items-center justify-end rounded-[4px] border border-[#9a9a9a] bg-linear-to-b from-[#fafafa] to-[#ececec] pr-1.5 shadow-sm">
            <Steps />
          </span>
        </span>
        <I n="rotate" c="ml-[10px]" />
        <I n="wrapOff" c="ml-[15px]" />
        <I n="wrapOn" c="ml-[7px]" />
        <I n="front" c="ml-2" />
        <I n="back" c="ml-[7px]" />
        <I n="align" c="ml-[6px]" />
        <Caret c="ml-[6px]" off />
        <I n="anchor" c="ml-[14px]" />
        <Caret c="ml-[6px]" />
        <I n="group" c="ml-[15px]" />
        <svg viewBox="0 0 9 8" className="ml-[18px] h-2 w-[9px] shrink-0" stroke="#111" strokeWidth="1.500" fill="none">
          <path d="M.800 .800L4 4L.800 7.200M4.800 .800L8 4L4.800 7.200" />
        </svg>
      </div>
      <div className="flex h-[28px] shrink-0 items-start bg-[#f1f1f1] pt-[4px]">
        <span className="ml-[11px] mt-[6px] h-[6px] w-[7px] shrink-0 border-b-2 border-l-2 border-[#777]" />
        <span className="w-[4px] shrink-0" />
        <Ruler />
        <span className="-mt-[4px] ml-[17px] flex h-[28px] w-[15px] items-end justify-center border-l border-[#ddd] bg-[#f7f7f7]">
          <span className="mr-px h-[12px] w-2 rounded-t-full bg-[#bdbdbd]" />
        </span>
      </div>
      <div className="flex h-[449px] shrink-0 bg-[#f1f1f1] pl-1">
        <VRuler />
        <Canvas />
      </div>
      <div className="flex h-[15px] shrink-0 items-center border-y border-[#dcdcdc] bg-[#f8f8f8] pl-px">
        <span className="h-2 w-[1000px] rounded-full bg-[#bebebe]" />
      </div>
      <div className="flex h-[35px] shrink-0 items-center pb-px">
        <Grip c="ml-1" />
        <Pressed n="cursor" c="ml-[6px]" />
        <I n="line" c="ml-[11px]" />
        <I n="rect" c="ml-[6px]" />
        <I n="ellipse" c="ml-[7px]" />
        <I n="pencil" c="ml-2" />
        <I n="text" c="ml-[7px]" />
        <I n="speech" c="ml-[7px]" />
        <I n="diamond" c="ml-[15px]" />
        <Caret c="ml-[5px]" />
        <I n="smiley" c="ml-[7px]" />
        <Caret c="ml-[5px]" />
        <I n="dblarrow" c="ml-[6px]" />
        <Caret c="ml-[7px]" />
        <I n="square" c="ml-[6px]" />
        <Caret c="ml-[6px]" />
        <I n="callout" c="ml-[5px]" />
        <Caret c="ml-[7px]" />
        <I n="star" c="ml-[5px]" />
        <Caret c="ml-[6px]" />
        <I n="polygon" c="ml-[14px]" />
        <I n="fontwork" c="ml-4" />
        <I n="imageOff" c="ml-[7px]" />
        <I n="exportIcon" c="ml-[14px]" />
      </div>
      <footer className="flex flex-1 items-center border-t border-[#c9c9c9] bg-[#e9e9e9] pt-px text-[13px] text-black">
        <span className="w-[84px] shrink-0 whitespace-nowrap pl-[11px] tracking-[0.550px]">Seite 1 / 1</span>
        <Sep />
        <span className="w-[140px] shrink-0 whitespace-nowrap pl-[4px] tracking-[0.300px]">6 Wörter, 43 Zeichen</span>
        <Sep />
        <span className="w-[72px] shrink-0 pl-2 tracking-[0.050px]">Standard</span>
        <Sep />
        <Sep c="ml-[157px]" />
        <Sep c="ml-[68px]" />
        <svg viewBox="0 0 16 12" className="ml-[9px] h-3 w-4 shrink-0">
          <rect x="1" y="3" width="8" height="6" fill="#777" />
          <path d="M10 1.500H14M10 10.500H14M12 1.500V10.500" stroke="#777" />
        </svg>
        <Sep c="ml-1" />
        <svg viewBox="0 0 14 14" className="ml-[9px] h-3.5 w-3.5 shrink-0" fill="none" stroke="#999">
          <path d="M11.500 6V12.500H2.500V1.500H9" />
          <path d="M5 7L7 9.500L12 3.500" strokeWidth="1.500" />
        </svg>
        <Sep c="ml-[6px]" />
        <Sep c="ml-[29px]" />
        <span className="ml-[9px] flex pb-1"><PosIcon /></span>
        <span className="ml-1 w-[38px] shrink-0 whitespace-nowrap tracking-[0.500px]">0,05 /</span>
        <span className="grid w-[57px] shrink-0 items-center overflow-hidden">
          <span className="pb-1 [grid-area:1/1]"><SizeIcon /></span>
          <span className="whitespace-nowrap pl-[5px] tracking-[0.350px] [grid-area:1/1]">0, 11,16</span>
        </span>
        <Sep />
        <svg viewBox="0 0 60 14" className="ml-[10px] h-3.5 w-[60px] shrink-0" fill="none" stroke="#8a8a8a">
          <path d="M1.500 2.500H5.500L8.500 5.500V11.500H1.500ZM5.500 2.500V5.500H8.500" stroke="#444" />
          <path d="M15.500 2.500H19.500L22.500 5.500V11.500H15.500ZM19.500 2.500V5.500H22.500M25.500 2.500H29.500L32.500 5.500V11.500H25.500ZM29.500 2.500V5.500H32.500" />
          <path d="M42.500 2.500H47.500V11.500H39.500V5.500ZM42.500 2.500V5.500H39.500M47.500 2.500H51.500L54.500 5.500V11.500H47.500M51.500 2.500V5.500H54.500" />
        </svg>
        <Sep c="ml-[6px]" />
        <Zoomer knob="left-[43px]" tick="left-[25px]" c="ml-[9px]" />
        <Sep c="ml-[7px]" />
        <span className="ml-2">100%</span>
      </footer>
    </section>
  );
}

function Zoomer({ knob, tick, c }: { knob: string; tick: string; c: string }) {
  return (
    <span className={`flex shrink-0 items-center ${c}`}>
      <span className="h-0.5 w-2 bg-[#808080]" />
      <span className="relative ml-1.5 h-[3px] w-[98px] bg-[#d2d2d2]">
        <span className={`absolute -top-[3px] h-[9px] w-0.5 bg-[#ccc] ${tick}`} />
        <span className={`absolute -top-[3px] h-[9px] w-[9px] rounded-full border border-[#777] bg-white ${knob}`} />
      </span>
      <svg viewBox="0 0 8 8" className="ml-1.5 h-2 w-2 shrink-0"><path d="M4 0V8M0 4H8" stroke="#808080" strokeWidth="2" /></svg>
    </span>
  );
}

function ImpressWindow() {
  return (
    <section className="absolute left-[150px] top-[98px] flex h-[643px] w-[1024px] flex-col overflow-hidden rounded-[5px] bg-[#cccccc] shadow-[0_6px_16px_rgba(0,0,0,0.550),0_0_2px_rgba(0,0,0,0.600)]">
      <header className="flex h-[22px] shrink-0 items-center justify-end border-b border-[#999] bg-linear-to-b from-[#f2f2f2] to-[#dcdcdc] pr-1">{fullscreen}</header>
      <div className="flex-1 bg-[#e4e4e4]" />
      <div className="flex h-[36px] shrink-0 items-center bg-linear-to-b from-[#a8a8a8] to-[#dadada]">
        <Grip c="ml-1" />
        <Pressed n="cursor" c="ml-[6px]" />
        <I n="line" c="ml-[11px]" />
        <I n="arrow" c="ml-[6px]" />
        <I n="rectGray" c="ml-[7px]" />
        <I n="ellipseGray" c="ml-2" />
        <I n="text" c="ml-[7px]" />
        <I n="curve" c="ml-4" />
        <Caret c="ml-1" />
        <I n="connector" c="ml-[6px]" />
        <Caret c="ml-[6px]" />
        <I n="arrow" c="ml-[7px]" />
        <Caret c="ml-[5px]" />
        <I n="diamond" c="ml-[7px]" />
        <Caret c="ml-[5px]" />
        <I n="smiley" c="ml-[7px]" />
        <Caret c="ml-[5px]" />
        <I n="dblarrow" c="ml-[6px]" />
        <Caret c="ml-[6px]" />
        <I n="square" c="ml-[7px]" />
        <Caret c="ml-[5px]" />
        <I n="callout" c="ml-[6px]" />
        <Caret c="ml-[6px]" />
        <I n="star" c="ml-[6px]" />
        <Caret c="ml-[6px]" />
        <I n="polygon" c="ml-[14px]" />
        <I n="dropper" c="ml-2" />
        <I n="fontwork" c="ml-[15px]" />
        <I n="image" c="ml-[7px]" />
        <I n="gallery" c="ml-[7px]" />
        <I n="exportIcon" c="ml-[14px]" />
      </div>
      <footer className="flex h-[23px] shrink-0 items-center whitespace-nowrap border-t border-[#b5b5b5] bg-[#e9e9e9] text-[13px] text-black">
        <span className="w-[219px] shrink-0 pl-[11px] tracking-[0.300px]">Textrahmen 'Dies ist...' markiert</span>
        <Sep />
        <span className="ml-2 flex pb-1"><PosIcon /></span>
        <span className="ml-[6px] w-[180px] shrink-0 tracking-[0.700px]">1,20 / 0,25</span>
        <span className="ml-[2px] flex pb-1"><SizeIcon /></span>
        <span className="ml-[5px] w-[180px] shrink-0 tracking-[0.700px]">4,20 x 4,52</span>
        <Sep />
        <svg viewBox="0 0 14 14" className="ml-[5px] h-3.5 w-3.5 shrink-0" fill="none">
          <path d="M8 1.500H1.500V11.500H9.500V10" stroke="#888" />
          <path d="M9 3.500V9.500M6.500 5L11.500 8M11.500 5L6.500 8" stroke="#d02020" strokeWidth="1.200" />
        </svg>
        <Sep c="ml-[3px]" />
        <Sep c="ml-[28px]" />
        <span className="w-[134px] shrink-0 pl-[9px] tracking-[0.450px]">Folie 1 / 1 (Layout)</span>
        <Sep />
        <span className="w-[69px] shrink-0 pl-2">Standard</span>
        <Sep />
        <Zoomer knob="left-[9px]" tick="left-[47px]" c="ml-[9px]" />
      </footer>
    </section>
  );
}

function ContextMenu() {
  const groups: [string, boolean][][] = [
    [["Linie...", false], ["Fläche...", false], ["Text...", false], ["Position und Größe...", false]],
    [["Beschreibung...", false], ["Name...", false]],
    [["Anordnung", true], ["Ausrichtung", true], ["Umlauf", true], ["Verankerung", true], ["Beschriftung...", false]],
    [["Gruppieren", true]],
    [["Ausschneiden", false], ["Kopieren", false], ["Einfügen", false]],
  ];
  return (
    <nav className="absolute left-[369px] top-[308px] h-[326px] w-[182px] rounded-[5px] bg-white/96 py-1 text-[13px] tracking-[0.130px] text-black shadow-[0_5px_14px_rgba(0,0,0,0.450),0_0_1px_rgba(0,0,0,0.500)]">
      {groups.map((g, i) => (
        <div key={i}>
          {i > 0 && <div className="mx-px flex h-[12px] items-center"><span className="h-px w-full bg-[#dedede]" /></div>}
          {g.map(([t, sub]) => (
            <div
              key={t}
              className={
                t === "Beschreibung..."
                  ? "flex h-[18px] items-center justify-between bg-linear-to-b from-[#628cee] to-[#1f5ae8] pb-[2px] pl-[21px] pr-3 font-semibold tracking-[-0.200px] text-white"
                  : "flex h-[18px] items-center justify-between pb-[2px] pl-[21px] pr-3"
              }
            >
              {t}
              {sub && <svg viewBox="0 0 9 10" className="mt-px h-[10px] w-[9px]"><path d="M0 0L9 5L0 10Z" fill="#3c3c3c" /></svg>}
            </div>
          ))}
        </div>
      ))}
    </nav>
  );
}

const notebook = (body: React.ReactNode) => (
  <svg viewBox="0 0 16 16" className="h-4 w-4 shrink-0" fill="none" stroke="#858585">
    <rect x="2.500" y="1.500" width="12" height="13" rx="1" fill="#f7f7f7" />
    <path d="M.500 3.500H4M.500 5.500H4M.500 7.500H4M.500 9.500H4M.500 11.500H4" />
    {body}
  </svg>
);

function Palette() {
  return (
    <section className="absolute left-[1071px] top-[163px] flex h-[453px] w-[181px] flex-col rounded-[5px] bg-[#eeeeee] shadow-[0_5px_14px_rgba(0,0,0,0.500),0_0_2px_rgba(0,0,0,0.600)]">
      <header className="flex h-[22px] shrink-0 items-center gap-2 rounded-t-[5px] border-b border-[#a5a5a5] bg-linear-to-b from-[#f8f8f8] to-[#dedede] pl-2">
        <Orb c="border-[#9c9c9c] bg-[#e4e4e4]" />
        <Orb c="border-[#9c9c9c] bg-[#e4e4e4]" />
        <Orb c="border-[#9c9c9c] bg-[#e4e4e4]" />
        <span className="ml-px text-[13px] tracking-[0.050px] text-[#7c7c7c]">Formatvorlagen</span>
      </header>
      <div className="flex h-[36px] shrink-0 items-center pb-[2px] pl-[3px]">
        <span className="flex h-[23px] w-[23px] shrink-0 items-center justify-center border border-[#8f93a1] bg-[#d9dde5]">
          {notebook(<path d="M10.500 4V12M8.500 12V4H12M8 4.500H7V7H8.500" stroke="#555" />)}
        </span>
        <span className="ml-[4px] flex gap-[7px]">
          {notebook(<text x="9" y="11.500" textAnchor="middle" fontFamily="Noto Sans" fontSize="10" fill="#777" stroke="none">a</text>)}
          {notebook(<rect x="5.500" y="4.500" width="7" height="7" strokeDasharray="2 3" />)}
          {notebook(<path d="M6.500 4.500H9.500L12.500 7V11.500H6.500ZM9.500 4.500V7H12" />)}
          {notebook(<path d="M6 5.500H8M10 5.500H13M10 8.500H13M6 11.500H8M10 11.500H13M6 8.500H8" />)}
        </span>
        <span className="ml-[9px] flex opacity-40"><svg viewBox="0 0 24 24" className="h-4 w-4">{icons.bucket}</svg></span>
        <svg viewBox="0 0 16 12" className="ml-[7px] h-3 w-4 shrink-0" fill="none" stroke="#b5b5b5">
          <path d="M4 1V11M6 11V1.500H2.500Q1 1.500 1 3.500Q1 5.500 4 5.500M9 2.500H15M9 5H14M9 7.500H15M9 10H14" />
        </svg>
        <Caret c="ml-[6px]" off />
      </div>
      <div className="mx-1 h-[360px] shrink-0 border border-t-2 border-[#e2e2e2] border-t-[#d2d2d2] bg-white" />
      <div className="mx-[7px] mt-[8px] flex h-[21px] items-center justify-between rounded-[4px] border border-[#bcbcbc] bg-linear-to-b from-white to-[#ececec] pl-[3px] pr-1.5 text-[13px] font-medium text-black">
        Benutzervorlagen <Steps faint />
      </div>
    </section>
  );
}

const overview = ["Introduction", "Goals", "Usage", "Feature matrix", "API", "FAQ", "Developing"];
const examples = ["Using TestNG", "Using JUnit", "Skipping Tests", "Inclusions and Exclusions", "Running a Single Test", "Class Loading", "Debugging Tests", "System Properties", "Configuring the Classpath", "Selecting providers", "New error summary"];

function Browser() {
  return (
    <section className="absolute left-0 top-[22px] flex h-[774px] w-[1273px] flex-col overflow-hidden rounded-[5px] bg-white">
      <div className="flex h-[36px] shrink-0 items-center border-b border-[#b9b9b9] bg-linear-to-b from-[#f4f4f4] to-[#e4e4e4] pl-3">
        <Orb c="border-[#b0b0b0] bg-[#e6e6e6]" />
        <Orb c="ml-2 border-[#b0b0b0] bg-[#e6e6e6]" />
        <Orb c="ml-2 border-[#b0b0b0] bg-[#e6e6e6]" />
        <span className="grid h-full w-[430px] items-end">
          <svg viewBox="0 0 430 25" className="ml-[10px] h-[25px] w-[430px] [grid-area:1/1]">
            <path d="M0 25Q3 24 5 17L10 4Q11 1 14 1H384Q388 1 390 4L396 16M398 12Q398 6 402 6H417Q420 6 421 9" fill="#f4f4f4" stroke="#b5b5b5" />
          </svg>
          <span className="flex h-[25px] items-center pl-[26px] text-[12px] text-black [grid-area:1/1]">
            <svg viewBox="0 0 14 16" className="mr-[3px] h-4 w-3.5"><path d="M1 1H8.500L13 5.500V15H1Z" fill="#fff" stroke="#444" strokeWidth="1.300" /><path d="M8.500 0V5.500H14Z" fill="#444" /></svg>
            Home
          </span>
        </span>
        <span className="ml-auto mr-[10px] flex opacity-70">{fullscreen}</span>
      </div>
      <div className="flex h-[36px] shrink-0 items-center border-b border-[#b4b4b4] bg-linear-to-b from-[#f4f4f4] to-[#e6e6e6] pl-[9px]">
        <svg viewBox="0 0 108 18" className="h-[18px] w-[108px] shrink-0" fill="none" strokeWidth="2.800">
          <path d="M16 9H2M8 2.500L1.500 9L8 15.500" stroke="#7c7c7c" />
          <path d="M29 9H43M37 2.500L43.500 9L37 15.500" stroke="#cdcdcd" />
          <path d="M70 5A6.500 6.500 0 1 0 71 11" stroke="#7c7c7c" />
          <path d="M72 1V8H65Z" fill="#7c7c7c" />
          <path d="M85 9L92.500 2L100 9H98V16H94.500V11H91V16H87V9Z" fill="#7c7c7c" />
        </svg>
        <span className="ml-[4px] h-[26px] w-[900px] rounded-[3px] border border-[#b0b0b0] bg-white" />
        <span className="ml-auto flex items-center gap-[12px] pr-[11px]">
          <svg viewBox="0 0 18 20" className="h-5 w-[18px]"><path d="M9 1A8 8 0 0 1 9 17V20Q1 16 1 9A8 8 0 0 1 9 1Z" fill="#9f9f9f" /><path d="M5 7H8V10L6.500 12M10 7H13V10L11.500 12" stroke="#eee" strokeWidth="2" fill="none" /></svg>
          <svg viewBox="0 0 20 20" className="h-[19px] w-[19px]"><path d="M6 .500H14L19.500 6V14L14 19.500H6L.500 14V6Z" fill="#e2492b" /><text x="10" y="13.500" textAnchor="middle" fontFamily="Liberation Sans" fontWeight="bold" fontSize="9" textLength="17" fill="#fff">ABP</text></svg>
          <svg viewBox="0 0 20 20" className="h-5 w-5"><path d="M6 .500H14L19.500 6V14L14 19.500H6L.500 14V6Z" fill="#fff" stroke="#444" /><path d="M6.500 2H13.500L18 6.500V13.500L13.500 18H6.500L2 13.500V6.500Z" fill="#e0191e" /><path d="M6.500 10V6M8.700 9V4.500M11 9V4.500M13.200 10V6" stroke="#fff" strokeWidth="1.700" strokeLinecap="round" /><path d="M5.800 9H14.200V11Q14 15.500 10 15.500Q7 15.500 5.800 12Z" fill="#fff" /></svg>
          <svg viewBox="0 0 14 14" className="h-3.5 w-3.5"><path d="M0 2H14M0 7H14M0 12H14" stroke="#777" strokeWidth="2.400" /></svg>
        </span>
      </div>
      <div className="flex flex-1 overflow-hidden font-['Liberation_Sans',sans-serif]">
        <div className="w-[1258px] shrink-0 overflow-hidden">
          <div className="flex h-[40px] items-center border-b border-[#d0d0d0] bg-linear-to-b from-white to-[#f2f2f2] pl-[35px] pt-px text-[14.500px] text-[#5a5a5a] shadow-[0_1px_8px_rgba(0,0,0,0.120)]">
            Overview
            <svg viewBox="0 0 8 4" className="ml-[6px] h-1 w-2"><path d="M0 0H8L4 4Z" fill="#555" /></svg>
          </div>
          <div className="ml-5 mt-[55px] flex h-[36px] w-[1218px] items-center rounded-[4px] bg-[#f5f5f5] pl-[15px] text-[14.500px] text-[#0f7dc8]">
            Apache
            <svg viewBox="0 0 14 14" className="ml-[4px] h-3.5 w-3.5"><circle cx="7" cy="7" r="6" fill="#bccbe0" stroke="#6886b4" strokeWidth="1.200" /><path d="M3 4L7 2L9 5L6 8ZM8 8L11 7L10 11Z" fill="#fff" /></svg>
            <span className="ml-[9px] text-[#bbb]">/</span>
          </div>
          <div className="mt-5 flex items-start">
            <div className="ml-5 h-[700px] w-[285px] shrink-0 overflow-hidden rounded-[4px] border border-[#e0e0e0] bg-[#f5f5f5] pt-[22px] text-[14.500px] text-[#0f7dc8]">
              <div className="flex h-[21px] items-center pl-[15px] text-[11px] font-bold text-[#999]">OVERVIEW</div>
              <div className="h-[2px]" />
              {overview.map((t) => (
                <div key={t} className="flex h-[26px] items-center whitespace-nowrap pl-[15px]">{t}</div>
              ))}
              <div className="mt-[12px] flex h-[21px] items-center pl-[15px] text-[11px] font-bold text-[#999]">EXAMPLES</div>
              <div className="h-[2px]" />
              {examples.map((t) => (
                <div
                  key={t}
                  className={
                    t === "Running a Single Test"
                      ? "flex h-[26px] items-center whitespace-nowrap bg-[#0a86cf] pl-[15px] font-bold tracking-[-0.300px] text-white"
                      : "flex h-[26px] items-center whitespace-nowrap pl-[15px]"
                  }
                >
                  {t}
                </div>
              ))}
            </div>
            <div className="ml-[26px] mt-[495px] flex h-[41px] w-[907px] items-center rounded-[4px] border border-[#cfcfcf] bg-[#f5f5f5] pl-[9px] pt-[2px] font-['DejaVu_Sans_Mono',monospace] text-[13.290px] text-[#333]">
              mvn -Dtest=TestCircle#mytest test
            </div>
          </div>
        </div>
        <div className="flex flex-1 items-start justify-center border-l border-[#e3e3e3] bg-[#fafafa] pt-[33px]">
          <span className="h-[280px] w-2 rounded-full bg-[#c1c1c1]" />
        </div>
      </div>
      <svg viewBox="0 0 70 70" className="absolute left-[1188px] top-[72px] h-[70px] w-[70px]">
        <path d="M6 0H48L70 22V64Z" fill="#666" />
        <path d="M9 0L70 61" stroke="#ccc" strokeDasharray="2 1.500" />
        <text transform="translate(19.500 -4.500) rotate(45)" fontFamily="Liberation Sans" fontWeight="bold" fontSize="13" fill="#fff" y="5" x="0">GitHub</text>
      </svg>
    </section>
  );
}

function MenuBar() {
  return (
    <header className="absolute left-0 top-0 flex h-[22px] w-[1280px] items-center whitespace-nowrap border-b border-[#3c4656] bg-linear-to-b from-[#cfe5fb] to-[#9cb6dc] text-[14px] text-black">
      <FaApple className="ml-[19px] h-[17px] w-[17px] shrink-0 text-[#333c4a]" />
      <b className="ml-[18px] w-[97px] shrink-0">LibreOffice</b>
      <span className="w-[54px] shrink-0">Datei</span>
      <span className="w-[90px] shrink-0">Bearbeiten</span>
      <span className="w-[68px] shrink-0">Ansicht</span>
      <span className="w-[78px] shrink-0">Einfügen</span>
      <span className="w-[66px] shrink-0">Format</span>
      <span className="w-[67px] shrink-0">Tabelle</span>
      <span className="w-[60px] shrink-0">Extras</span>
      <span className="w-[67px] shrink-0">Fenster</span>
      <span className="w-[92px] shrink-0">Hilfe</span>
      <svg viewBox="0 0 16 16" className="h-4 w-4 shrink-0">
        <path d="M4.500 0Q7 0 8 1Q15 1 15 8.500Q16 10 16 12Q15.500 16 11.500 16Q9.500 16 8.500 15Q1 15 1 8Q0 6.500 0 4.500Q.500 .500 4.500 0Z" fill="#222" />
        <path d="M4.500 8L7.500 11L12 5" fill="none" stroke="#c6dbf5" strokeWidth="2" />
      </svg>
      <FaDropbox className="ml-[8px] h-[17px] w-[17px] shrink-0" />
      <FaGoogleDrive className="ml-[9px] h-4 w-4 shrink-0" />
      <svg viewBox="0 0 16 16" className="ml-[10px] h-4 w-4 shrink-0"><circle cx="8" cy="8" r="7.500" fill="#555" /><circle cx="8" cy="8" r="5.500" fill="#222" stroke="#ddd" strokeWidth="1.500" /><circle cx="8" cy="7" r="2" fill="#888" /></svg>
      <FaEvernote className="ml-[8px] h-4 w-4 shrink-0 text-[#333]" />
      <svg viewBox="0 0 14 16" className="ml-[7px] h-4 w-3.5 shrink-0"><path d="M7 0A7 7 0 0 1 7 14V16Q0 13 0 7A7 7 0 0 1 7 0Z" fill="#707a88" /></svg>
      <svg viewBox="0 0 14 16" className="ml-[11px] h-4 w-3.5 shrink-0"><path d="M9 0L3 4V7L8 10L3 9L1 11L5 16L11 12V9L6 6L11 7L13 4Z" fill="#111" /></svg>
      <svg viewBox="0 0 18 14" className="ml-[13px] h-3.5 w-[18px] shrink-0"><rect x="1" y="2" width="16" height="10" rx="1" fill="none" stroke="#111" strokeWidth="2" /><path d="M4 4V10M7 4V10M10 4V10M13 4V10" stroke="#111" strokeWidth="1.700" /></svg>
      <svg viewBox="0 0 16 16" className="ml-[13px] h-4 w-4 shrink-0"><path d="M3 4A6.500 6.500 0 1 1 3 12" fill="none" stroke="#111" strokeWidth="1.500" /><path d="M0 7L3 11L6 7Z" fill="#111" /><path d="M8.500 4V9M8.500 10.500V12" stroke="#111" strokeWidth="1.700" /></svg>
      <svg viewBox="0 0 14 14" className="ml-[15px] h-3.5 w-3.5 shrink-0" stroke="#4b5870" fill="none"><path d="M7 1V13L10 10L4 5M7 1L10 4L4 10" /><path d="M0 7H3M11 7H14" strokeWidth="2" strokeDasharray="1.500 1" /></svg>
      <svg viewBox="0 0 20 16" className="ml-[13px] h-4 w-5 shrink-0" fill="none" stroke="#111" strokeWidth="2"><path d="M.500 6Q10 -3 19.500 6M3.500 9Q10 3 16.500 9M6.500 12Q10 8.500 13.500 12" /><circle cx="10" cy="14" r="1" fill="#111" strokeWidth="1" /></svg>
      <svg viewBox="0 0 16 14" className="ml-[10px] h-3.5 w-4 shrink-0"><path d="M0 5H3L8 1V13L3 9H0Z" fill="#111" /><path d="M10 4.500Q12 7 10 9.500M12 2.500Q15.500 7 12 11.500" stroke="#111" strokeWidth="1.300" fill="none" /></svg>
      <svg viewBox="0 0 22 14" className="ml-[13px] h-3.5 w-[22px] shrink-0" fill="none" stroke="#333"><rect x="1" y="1.500" width="18" height="11" rx="1.500" strokeWidth="1.500" /><path d="M20.500 5V9" strokeWidth="2" /><path d="M5 8.500L9 5.500L11 8L15 5.500" strokeWidth="1.600" /></svg>
      <span className="ml-[13px] w-[56px] shrink-0 tracking-[0.700px]">11:11</span>
      <svg viewBox="0 0 16 16" className="h-4 w-4 shrink-0" fill="none" stroke="#111"><circle cx="6.500" cy="6.500" r="5" strokeWidth="1.800" /><path d="M10.500 10.500L15 15" strokeWidth="2.400" /></svg>
      <svg viewBox="0 0 20 14" className="ml-[14px] h-3.5 w-5 shrink-0" stroke="#111" strokeWidth="2.800"><path d="M0 2H3M5 2H17M0 7H3M5 7H20M0 12H3M5 12H18" /></svg>
    </header>
  );
}

export default function App() {
  return (
    <div className="relative h-[800px] w-[1280px] overflow-hidden bg-black font-['Noto_Sans','Open_Sans',sans-serif] leading-none">
      <svg className="absolute h-0 w-0">
        <defs>
          <linearGradient id="shade" x1="0" y1="0" x2="1" y2="1">
            <stop offset="0" stopColor="#777" stopOpacity=".65" />
            <stop offset="1" stopColor="#ddd" stopOpacity=".45" />
          </linearGradient>
        </defs>
      </svg>
      <div className="absolute left-[1268px] top-[22px] flex h-[774px] w-[12px] flex-col border-l border-[#888] bg-[#d6d6d6]">
        <span className="ml-[5px] mt-[16px] h-[15px] w-[5px] bg-[#1c3b80]" />
        <span className="mt-[64px] h-[55px] border-y border-[#aaa] bg-[#e3e3e3]" />
        <span className="mt-[30px] h-[460px] border-y border-[#999] bg-[#cbcbcb]" />
        <span className="mt-[40px] h-[62px] border-y border-[#999] bg-[#bcbcbc]" />
      </div>
      <Browser />
      <section className="absolute left-[156px] top-[24px] h-[60px] w-[190px] rounded-[5px] bg-linear-to-b from-[#f0f0f0] to-[#dcdcdc] shadow-[0_1px_6px_rgba(0,0,0,0.350)]">
        <div className="flex h-[19px] items-center gap-2 pl-2">
          <Orb c="border-[#a8a8a8] bg-[#e6e6e6]" />
          <Orb c="border-[#a8a8a8] bg-[#e6e6e6]" />
          <Orb c="border-[#a8a8a8] bg-[#e6e6e6]" />
          <span className="ml-[1px] text-[13px] text-[#828282]">Freunde</span>
        </div>
      </section>
      <section className="absolute left-[126px] top-[98px] h-[631px] w-[400px] rounded-[5px] bg-[#b9b9b9] shadow-[0_3px_14px_rgba(0,0,0,0.450),0_0_2px_rgba(0,0,0,0.700)]" />
      <section className="absolute left-[128px] top-[77px] flex h-[641px] w-[400px] flex-col justify-end rounded-[5px] bg-[#cfcfcf] shadow-[0_3px_10px_rgba(0,0,0,0.400),0_0_2px_rgba(0,0,0,0.700)]">
        <div className="flex h-[30px] items-center">
          <Grip c="ml-1" />
          <span className="ml-[6px] h-[21px] w-[31px] self-start border border-[#9095a5] bg-[#8a98b8]/25" />
        </div>
        <div className="flex h-[22px] items-center border-t border-[#aaa] pl-[11px] text-[13px] text-black">Te</div>
      </section>
      <ImpressWindow />
      <div className="absolute left-[132px] top-[42px] h-[641px] w-[1024px] rounded-[5px] shadow-[0_14px_30px_rgba(0,0,0,0.550),0_0_3px_rgba(0,0,0,0.700)]" />
      <MainWindow />
      <Palette />
      <ContextMenu />
      <MenuBar />
    </div>
  );
}
